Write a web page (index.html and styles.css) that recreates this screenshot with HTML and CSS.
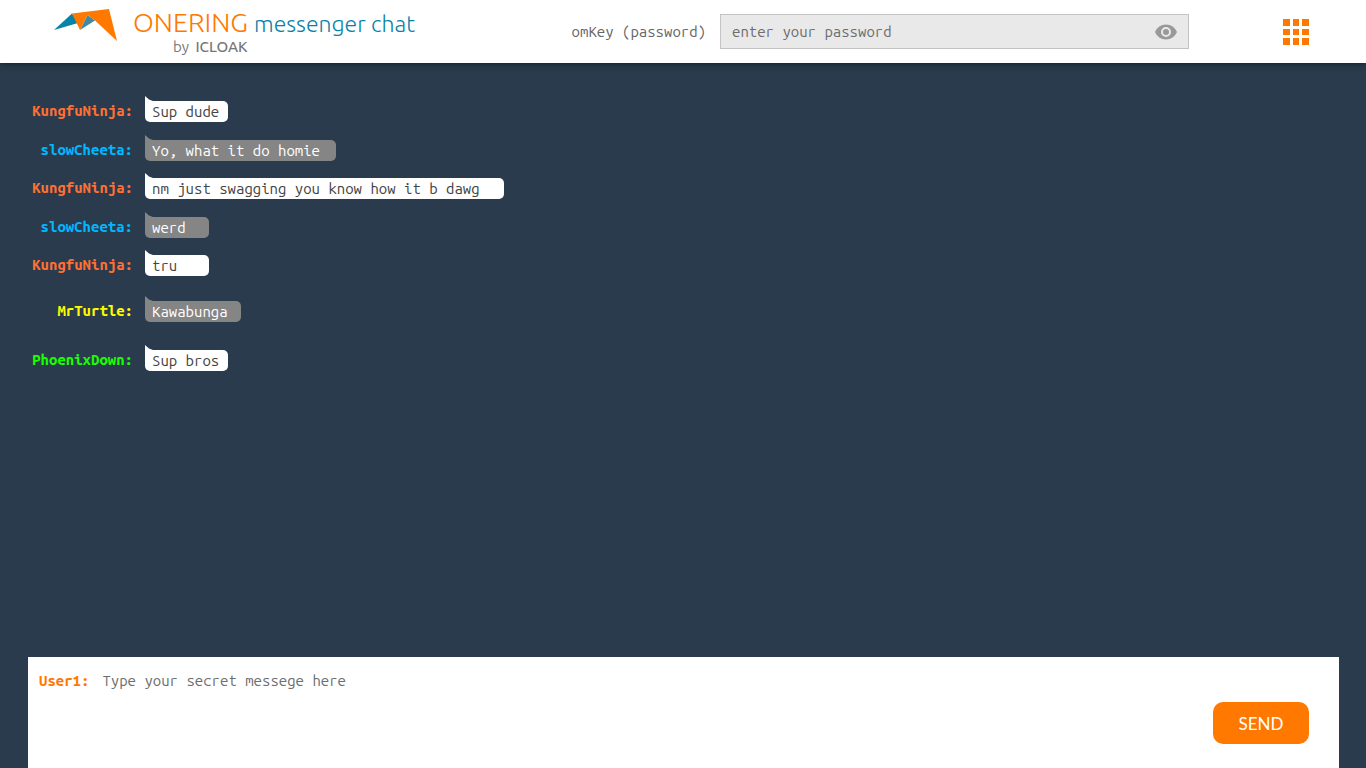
FILE: index.html
```html
<!DOCTYPE html>
<html lang="en">
<head>
<meta charset="utf-8">
<meta name="viewport" content="width=device-width, initial-scale=1">
<title>OneRing messenger chat</title>
<link rel="stylesheet" href="styles.css">
</head>
<body>
<header class="topbar">
  <a class="brand" href="#">
    <svg class="brand-mark" viewBox="0 0 63 32" aria-hidden="true">
      <path fill="#0782a8" d="M0 21 18 4.500 24 14Z"/>
      <path fill="#408ba2" d="M33.500 6 41 11.500 26 21Z"/>
      <path fill="#ff7800" d="M18 4.500 55 0 63 32 41 11.500 33.500 6 26 21Z"/>
    </svg>
    <span class="brand-text">
      <span class="brand-title"><span class="brand-name">ONERING</span><span class="brand-product">messenger chat</span></span>
      <span class="brand-by">by <strong class="brand-owner">ICLOAK</strong></span>
    </span>
  </a>
  <form class="key-form">
    <label class="key-label" for="omkey">omKey (password)</label>
    <div class="key-field">
      <input class="key-input" id="omkey" type="password" placeholder="enter your password">
      <button class="icon-button" type="button" aria-label="Show password">
        <svg width="22" height="16" viewBox="0 0 22 16" aria-hidden="true">
          <path fill="#999" fill-rule="evenodd" d="M11 0.500C6 0.500 1.800 3.500 0 8c1.800 4.500 6 7.500 11 7.500S20.200 12.500 22 8C20.200 3.500 16 0.500 11 0.500ZM11 3a5 5 0 1 1 0 10 5 5 0 0 1 0-10Z"/>
          <circle cx="11" cy="8" r="3" fill="#999"/>
        </svg>
      </button>
    </div>
  </form>
  <button class="icon-button" type="button" aria-label="Apps">
    <svg width="26" height="26" viewBox="0 0 26 26" aria-hidden="true">
      <path fill="#ff7800" d="M0 0h7v7H0zM10 0h6v7h-6zM19 0h7v7h-7zM0 10h7v6H0zM10 10h6v6h-6zM19 10h7v6h-7zM0 19h7v7H0zM10 19h6v7h-6zM19 19h7v7h-7z"/>
    </svg>
  </button>
</header>

<main class="messages">
  <div class="message"><span class="author ninja">KungfuNinja:</span><p class="bubble short">Sup dude</p></div>
  <div class="message reply"><span class="author cheeta">slowCheeta:</span><p class="bubble long">Yo, what it do homie</p></div>
  <div class="message"><span class="author ninja">KungfuNinja:</span><p class="bubble wide">nm just swagging you know how it b dawg</p></div>
  <div class="message reply"><span class="author cheeta">slowCheeta:</span><p class="bubble">werd</p></div>
  <div class="message last-of-talk"><span class="author ninja">KungfuNinja:</span><p class="bubble">tru</p></div>
  <div class="message reply last-of-talk"><span class="author turtle">MrTurtle:</span><p class="bubble medium">Kawabunga</p></div>
  <div class="message"><span class="author phoenix">PhoenixDown:</span><p class="bubble short">Sup bros</p></div>
</main>

<form class="composer">
  <label class="composer-user" for="message">User1:</label>
  <textarea class="composer-input" id="message" placeholder="Type your secret messege here"></textarea>
  <button class="send" type="button">SEND</button>
</form>
</body>
</html>
```
FILE: styles.css
```css
* {
  box-sizing: border-box;
}

body {
  display: flex;
  flex-direction: column;
  min-height: 100vh;
  margin: 0;
  background: #293b4c;
  font: 300 15px/21px "Ubuntu Mono", "DejaVu Sans Mono", monospace;
}

input,
textarea,
button {
  font: inherit;
}

.icon-button {
  display: flex;
  padding: 0;
  border: 0;
  background: none;
  cursor: pointer;
}

/* Top bar */
.topbar {
  display: flex;
  align-items: center;
  min-height: 63px;
  padding: 0 57px 0 54px;
  background: #fff;
  box-shadow: 0 1px 6px #14202c;
}

.brand {
  display: flex;
  gap: 16px;
  padding-top: 9px;
  align-self: flex-start;
  text-decoration: none;
  white-space: nowrap;
}

.brand-mark {
  width: 63px;
  height: 32px;
}

.brand-text {
  display: flex;
  flex-direction: column;
  font-family: Ubuntu, "Open Sans", sans-serif;
}

.brand-title {
  display: flex;
  align-items: baseline;
  gap: 6px;
  font-weight: 200;
  line-height: 26px;
}

.brand-name {
  color: #ff7800;
  font-size: 27px;
}

.brand-product {
  color: #0782a8;
  font-size: 23px;
}

.brand-by {
  padding-left: 40px;
  color: #777;
  font-size: 15px;
  font-weight: 400;
  line-height: 20px;
}

.brand-owner {
  margin-left: 3px;
  font-weight: 500;
}

.key-form {
  display: flex;
  flex: 1;
  align-items: center;
  justify-content: flex-end;
  gap: 14px;
  margin: 0 94px 0 40px;
}

.key-label {
  color: #666;
  white-space: nowrap;
}

.key-field {
  display: flex;
  align-items: center;
  flex: 0 1 469px;
  height: 35px;
  padding: 0 11px;
  border: 1px solid #c3c3c3;
  background: #e9e9e9;
}

.key-input {
  flex: 1;
  min-width: 0;
  padding: 0;
  border: 0;
  background: none;
  color: #444;
}

.key-input::placeholder,
.composer-input::placeholder {
  color: #6e6e6e;
  opacity: 1;
}

/* Conversation */
.messages {
  flex: 1;
  padding: 38px 28px;
}

.message {
  display: grid;
  grid-template-columns: 105px 1fr;
  column-gap: 12px;
  justify-items: start;
  margin-bottom: 18px;
}

.reply {
  margin-bottom: 17px;
}

.last-of-talk {
  margin-bottom: 25px;
}

.reply.last-of-talk {
  margin-bottom: 28px;
}

.author {
  justify-self: end;
  font-weight: bold;
  line-height: 20px;
}

.ninja { color: #ff7034; }
.cheeta { color: #00b7ff; }
.turtle { color: #fffc00; }
.phoenix { color: #19ff00; }

.bubble {
  position: relative;
  min-width: 64px;
  margin: 0;
  padding: 0 7px;
  border-radius: 0 5px 5px 5px;
  background: #fff;
  color: #444;
}

.bubble::before {
  content: "";
  position: absolute;
  top: -5px;
  left: 0;
  width: 8px;
  height: 5px;
  background: inherit;
  clip-path: polygon(0 0, 50% 70%, 100% 100%, 0 100%);
}

.short { min-width: 83px; }
.medium { min-width: 96px; }
.long { min-width: 191px; }
.wide { min-width: 359px; }

.reply .bubble {
  background: #858585;
  color: #fff;
}

/* Composer */
.composer {
  display: flex;
  gap: 13px;
  min-height: 111px;
  margin: 0 27px 0 28px;
  padding: 13px 30px 24px 11px;
  background: #fff;
}

.composer-user {
  color: #ff7800;
  font-weight: bold;
}

.composer-input {
  flex: 1;
  min-width: 0;
  padding: 0;
  border: 0;
  background: none;
  color: #444;
  resize: none;
}

.key-input:focus,
.composer-input:focus {
  outline: none;
}

.send {
  align-self: flex-end;
  width: 96px;
  height: 42px;
  border: 0;
  border-radius: 10px;
  background: #ff7800;
  color: #fff;
  font-family: Lato, sans-serif;
  font-size: 17px;
  font-weight: 400;
  cursor: pointer;
}
```
